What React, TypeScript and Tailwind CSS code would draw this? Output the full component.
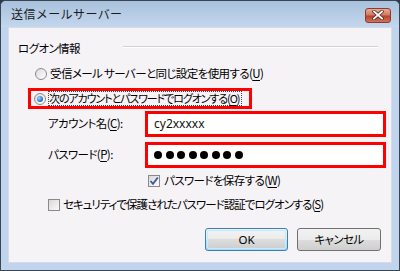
import React from "react";

function Radio({ checked }: { checked?: boolean }) {
  return (
    <div className="w-[12px] h-[12px] rounded-full border border-[#8a8a8a] bg-[linear-gradient(135deg,#dcdcdc,#ffffff)] flex items-center justify-center shrink-0">
      {checked && (
        <div className="w-[6px] h-[6px] rounded-full bg-[radial-gradient(circle_at_35%_35%,#9fd6ff,#1e6bb8_70%,#0d3f7a)]" />
      )}
    </div>
  );
}

function Check({ checked }: { checked?: boolean }) {
  return (
    <div className="w-[12px] h-[12px] border border-[#8a8a8a] bg-[linear-gradient(135deg,#d8d8d8,#fbfbfb)] flex items-center justify-center shrink-0">
      {checked && (
        <svg width="10" height="10" viewBox="0 0 10 10">
          <path d="M1.5 5 L4 7.8 L8.8 1.5" fill="none" stroke="#3d56a0" strokeWidth="1.8" />
        </svg>
      )}
    </div>
  );
}

function U({ c }: { c: string }) {
  return (
    <span>
      (<span className="underline underline-offset-[2px]">{c}</span>)
    </span>
  );
}

export default function App() {
  return (
    <div className="w-[400px] h-[271px] bg-[#2b3a4a] font-['Noto_Sans_CJK_JP',sans-serif] [font-feature-settings:'palt'] text-[11.5px] tracking-[-0.6px] leading-none text-black whitespace-nowrap">
      <div className="w-full h-full rounded-t-[6px] border border-[#3a4552] bg-[#c0d5ed] flex flex-col overflow-hidden">
        {/* title bar */}
        <div className="h-[26px] shrink-0 bg-[linear-gradient(#a9c1dc,#c3d7ee)] flex items-center justify-between pl-[10px] pr-[8px]">
          <span className="text-[12px] text-[#1b1b1b] [font-feature-settings:normal] tracking-[0.4px]">送信メールサーバー</span>
          <div className="w-[26px] h-[15px] rounded-[3px] border border-[#8a3c30] bg-[linear-gradient(#e9a999,#d37a66_45%,#b9412b_55%,#d2735b)] flex items-center justify-center mt-[2px]">
            <svg width="12" height="10" viewBox="0 0 12 10">
              <path d="M2 1.5 L10 8.5 M10 1.5 L2 8.5" stroke="#5a2a22" strokeWidth="3.4" strokeLinecap="square" />
              <path d="M2 1.5 L10 8.5 M10 1.5 L2 8.5" stroke="#ffffff" strokeWidth="1.8" strokeLinecap="square" />
            </svg>
          </div>
        </div>
        {/* body */}
        <div className="mx-[7px] h-[236px] shrink-0 bg-[#f6f3f7] border border-[#d6dce6] flex flex-col">
          {/* group header */}
          <div className="mt-[13px] h-[16px] flex items-center pl-[9px] pr-[13px]">
            <span>ログオン情報</span>
            <div className="flex-1 h-[2px] ml-[43px] bg-[#d4d0d4] border-b border-white -mt-[4px]" />
          </div>
          {/* radio 1 */}
          <div className="mt-[9px] h-[16px] flex items-center pl-[26px] gap-[3px]">
            <Radio />
            <span>受信メール サーバーと同じ設定を使用する<U c="U" /></span>
          </div>
          {/* radio 2 */}
          <div className="mt-[6px] ml-[19px] h-[21px] w-[224px] border-[3px] border-[#ff0000] flex items-center pl-[3px] gap-[2px]">
            <Radio checked />
            <span className="border border-dotted border-[#444] pl-0 pr-[2px] py-[1px] text-[11px] tracking-[-1.1px]">次のアカウントとパスワードでログオンする<U c="O" /></span>
          </div>
          {/* account */}
          <div className="mt-[2px] h-[26px] flex items-center pl-[39px]">
            <span className="w-[97px]">アカウント名<U c="C" />:</span>
            <div className="w-[241px] h-[26px] border-[3px] border-[#ff0000] bg-white flex items-center pl-[6px]">
              <span className="font-['Noto_Sans',sans-serif] text-[12px] tracking-normal text-[#111]">cy2xxxxx</span>
            </div>
          </div>
          {/* password */}
          <div className="mt-[5px] h-[26px] flex items-center pl-[39px]">
            <span className="w-[97px]">パスワード<U c="P" />:</span>
            <div className="w-[241px] h-[26px] border-[3px] border-[#ff0000] bg-white flex items-center pl-[6px] gap-[3.5px]">
              {[0, 1, 2, 3, 4, 5, 6, 7].map((i) => (
                <div key={i} className="w-[8px] h-[8px] rounded-full bg-black" />
              ))}
            </div>
          </div>
          {/* checkbox 1 */}
          <div className="mt-[5px] h-[16px] flex items-center pl-[139px] gap-[4px]">
            <Check checked />
            <span className="pr-[1px]">パスワードを保存する<U c="W" /></span>
          </div>
          {/* checkbox 2 */}
          <div className="mt-[8px] h-[16px] flex items-center pl-[39px] gap-[3px]">
            <Check />
            <span className="tracking-[-1px] pr-[1px]">セキュリティで保護されたパスワード認証でログオンする<U c="S" /></span>
          </div>
          {/* buttons */}
          <div className="mt-[15px] flex justify-end gap-[9px] pr-[10px]">
            <div className="w-[83px] h-[23px] rounded-[3px] border border-[#3c7fb1] bg-[linear-gradient(#eaf6fd,#d9f0fc_50%,#bee6fd_50%,#a7d9f5)] p-[1px]">
              <div className="w-full h-full rounded-[2px] border border-[#c8e8fb] bg-[linear-gradient(#f2f2f2,#ebebeb_50%,#dddddd_50%,#cfcfcf)] flex items-center justify-center font-['Noto_Sans',sans-serif] tracking-normal">
                OK
              </div>
            </div>
            <div className="w-[84px] h-[23px] rounded-[3px] border border-[#707070] bg-[linear-gradient(#f2f2f2,#ebebeb_50%,#dddddd_50%,#cfcfcf)] flex items-center justify-center">
              キャンセル
            </div>
          </div>
        </div>
        <div className="flex-1" />
      </div>
    </div>
  );
}
